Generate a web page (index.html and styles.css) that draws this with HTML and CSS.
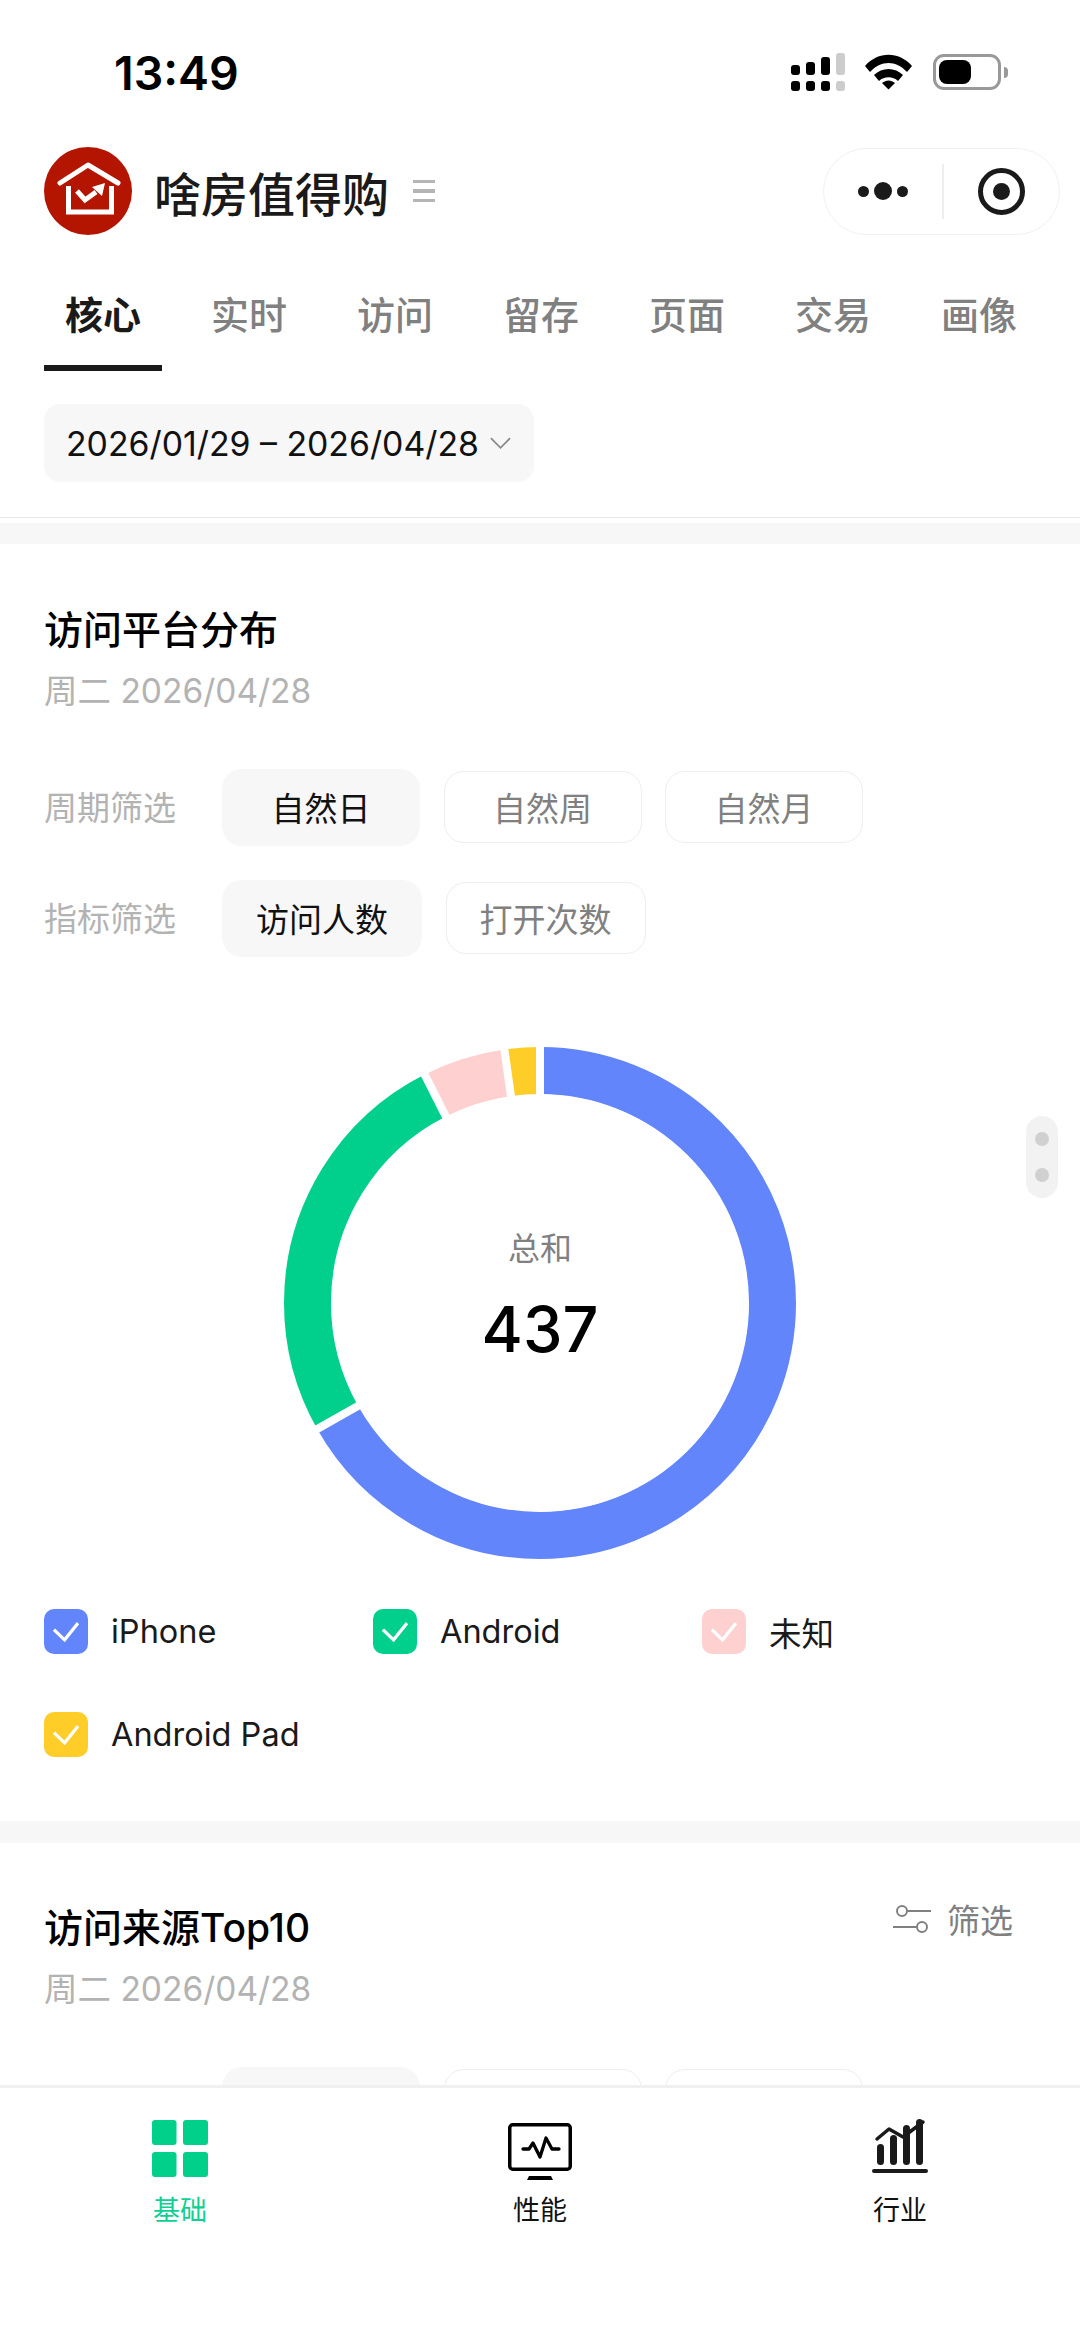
FILE: index.html
```html
<!DOCTYPE html>
<html lang="zh">
<head>
<meta charset="utf-8">
<title>访问分析</title>
<link rel="stylesheet" href="styles.css">
</head>
<body>
<div class="app">
  <header class="status">
    <span class="time">13:49</span>
    <div class="status-icons">
      <svg class="signal" width="54" height="38" viewBox="0 0 54 38">
        <g fill="#000">
          <rect x="0" y="12" width="9" height="10" rx="3"/><rect x="15" y="9" width="9" height="13" rx="3"/><rect x="30" y="4" width="9" height="18" rx="3"/>
          <rect x="0" y="28" width="9" height="10" rx="3"/><rect x="15" y="28" width="9" height="10" rx="3"/><rect x="30" y="28" width="9" height="10" rx="3"/>
        </g>
        <g fill="#ccc"><rect x="45" y="0" width="9" height="22" rx="3"/><rect x="45" y="28" width="9" height="10" rx="3"/></g>
      </svg>
      <svg class="wifi" width="47" height="36" viewBox="0 0 47 36">
        <path d="M0 12C13-3 34-3 47 12l-5 6C31 6 16 6 5 18z" fill="#000"/>
        <path d="M9 21c8-8 21-8 29 0l-5 6c-5-5-14-5-19 0z" fill="#000"/>
        <path d="M17 29c4-3.500 9-3.500 13 0l-6.500 6.500z" fill="#000"/>
      </svg>
      <div class="battery"><span class="battery-level"></span></div>
      <span class="battery-cap"></span>
    </div>
  </header>

  <nav class="navbar">
    <svg class="logo" width="88" height="88" viewBox="0 0 88 88">
      <circle cx="44" cy="44" r="44" fill="#b41500"/>
      <path d="M16 36L44 18L74 36" fill="none" stroke="#fff" stroke-width="5" stroke-linecap="round" stroke-linejoin="round"/>
      <path d="M24.500 39V65H67.500V39" fill="none" stroke="#fff" stroke-width="5"/>
      <path d="M33 44L41 53L52 45" fill="none" stroke="#fff" stroke-width="5"/>
      <path d="M48 40L61 36L58 49z" fill="#fff"/>
    </svg>
    <h1 class="app-name">啥房值得购</h1>
    <span class="menu-lines"><i></i><i></i><i></i></span>
    <div class="capsule">
      <div class="capsule-more"><i class="dot"></i><i class="dot big"></i><i class="dot"></i></div>
      <span class="capsule-div"></span>
      <div class="capsule-target"><span></span></div>
    </div>
  </nav>

  <div class="tabs">
    <div class="tab active">核心</div>
    <div class="tab">实时</div>
    <div class="tab">访问</div>
    <div class="tab">留存</div>
    <div class="tab">页面</div>
    <div class="tab">交易</div>
    <div class="tab">画像</div>
  </div>

  <main class="scroll">
    <section class="date-bar">
      <div class="date-pill">
        <span>2026/01/29 – 2026/04/28</span>
        <svg width="21" height="12" viewBox="0 0 22 12"><path d="M1 1L11 11L21 1" fill="none" stroke="#888" stroke-width="1.800"/></svg>
      </div>
    </section>

    <section class="card first">
      <h2 class="card-title">访问平台分布</h2>
      <p class="card-date">周二 2026/04/28</p>
      <div class="filter-row row-period">
        <span class="filter-label">周期筛选</span>
        <div class="chips">
          <span class="chip on">自然日</span>
          <span class="chip">自然周</span>
          <span class="chip">自然月</span>
        </div>
      </div>
      <div class="filter-row row-metric">
        <span class="filter-label">指标筛选</span>
        <div class="chips">
          <span class="chip on wide">访问人数</span>
          <span class="chip wide">打开次数</span>
        </div>
      </div>
      <div class="donut">
        <svg width="512" height="512" viewBox="0 0 512 512">
          <g fill="none" stroke-width="47" transform="rotate(-90 256 256)">
            <circle class="seg" cx="256" cy="256" r="232.500" pathLength="360" stroke="#6285fb" stroke-dasharray="240.500 119.500"/>
            <circle class="seg" cx="256" cy="256" r="232.500" pathLength="360" stroke="#01d08c" stroke-dasharray="92.700 267.300" stroke-dashoffset="-240.500"/>
            <circle class="seg" cx="256" cy="256" r="232.500" pathLength="360" stroke="#fed0cf" stroke-dasharray="18.800 341.200" stroke-dashoffset="-333.200"/>
            <circle class="seg" cx="256" cy="256" r="232.500" pathLength="360" stroke="#fecd27" stroke-dasharray="8 352" stroke-dashoffset="-352"/>
          </g>
          <g stroke="#fff" stroke-width="8">
            <line x1="256" y1="256" x2="256" y2="-4"/>
            <line x1="256" y1="256" x2="256" y2="-4" transform="rotate(240.500 256 256)"/>
            <line x1="256" y1="256" x2="256" y2="-4" transform="rotate(333.200 256 256)"/>
            <line x1="256" y1="256" x2="256" y2="-4" transform="rotate(352 256 256)"/>
          </g>
          <circle cx="256" cy="256" r="208.500" fill="#fff"/>
        </svg>
        <div class="donut-center">
          <span class="donut-label">总和</span>
          <span class="donut-value">437</span>
        </div>
      </div>
      <ul class="legend">
        <li><span class="check blue"><svg width="26" height="21" viewBox="0 0 28 22"><path d="M1 9L12.500 20L27 2" fill="none" stroke="#fff" stroke-width="3.500"/></svg></span>iPhone</li>
        <li><span class="check green"><svg width="26" height="21" viewBox="0 0 28 22"><path d="M1 9L12.500 20L27 2" fill="none" stroke="#fff" stroke-width="3.500"/></svg></span>Android</li>
        <li><span class="check pink"><svg width="26" height="21" viewBox="0 0 28 22"><path d="M1 9L12.500 20L27 2" fill="none" stroke="#fff" stroke-width="3.500"/></svg></span>未知</li>
        <li><span class="check yellow"><svg width="26" height="21" viewBox="0 0 28 22"><path d="M1 9L12.500 20L27 2" fill="none" stroke="#fff" stroke-width="3.500"/></svg></span>Android Pad</li>
      </ul>
    </section>

    <section class="card second">
      <div class="card-head">
        <div>
          <h2 class="card-title">访问来源Top10</h2>
          <p class="card-date">周二 2026/04/28</p>
        </div>
        <div class="filter-btn">
          <svg width="38" height="32" viewBox="0 0 38 32" fill="none" stroke="#808080" stroke-width="2">
            <circle cx="9" cy="8" r="5"/><path d="M14 8H38"/>
            <circle cx="29" cy="24" r="5"/><path d="M0 24H24"/>
          </svg>
          <span>筛选</span>
        </div>
      </div>
      <div class="filter-row row-cut">
        <span class="filter-label"></span>
        <div class="chips">
          <span class="chip on"></span>
          <span class="chip"></span>
          <span class="chip"></span>
        </div>
      </div>
    </section>

    <div class="float-handle"><i></i><i></i></div>
  </main>

  <footer class="tabbar">
    <div class="bar-item active">
      <svg width="58" height="62" viewBox="0 0 58 62" fill="#00d08a">
        <rect x="1" y="1" width="24.500" height="25" rx="3"/><rect x="32" y="1" width="25" height="25" rx="3"/>
        <rect x="1" y="33" width="24.500" height="25" rx="3"/><rect x="32" y="33" width="25" height="25" rx="3"/>
      </svg>
      <span>基础</span>
    </div>
    <div class="bar-item">
      <svg width="66" height="62" viewBox="0 0 66 62">
        <rect x="2.750" y="5.750" width="60.500" height="44.500" rx="3" fill="none" stroke="#000" stroke-width="3.500"/>
        <path d="M16 30H22L26 24L33 38L39 19L45 30H52" fill="none" stroke="#000" stroke-width="3.300" stroke-linecap="round" stroke-linejoin="round"/>
        <path d="M20 61L22 57H44L46 61z"/>
      </svg>
      <span>性能</span>
    </div>
    <div class="bar-item">
      <svg width="58" height="62" viewBox="0 0 58 62">
        <path d="M6 20L18 10L32 18L52 3" fill="none" stroke="#1a1a1a" stroke-width="3.500" stroke-linecap="round" stroke-linejoin="round"/>
        <g fill="#1a1a1a">
          <rect x="6" y="25" width="7" height="21" rx="3.500"/><rect x="19" y="16" width="7" height="30" rx="3.500"/>
          <rect x="32" y="6" width="7" height="40" rx="3.500"/><rect x="45" y="0" width="7" height="46" rx="3.500"/>
          <rect x="1" y="50" width="56" height="4" rx="2"/>
        </g>
      </svg>
      <span>行业</span>
    </div>
  </footer>
</div>
</body>
</html>
```
FILE: styles.css
```css
* { box-sizing: border-box; margin: 0; padding: 0; }
html, body { width: 1080px; height: 2337px; overflow: hidden; background: #fff; }
body { font-family: "Inter", "Noto Sans CJK SC", sans-serif; color: #1a1a1a; }
i { display: block; font-style: normal; }
ul { list-style: none; }

.app { display: flex; flex-direction: column; width: 1080px; height: 2337px; }

.status { flex: none; height: 147px; display: flex; align-items: flex-start; justify-content: space-between; padding: 53px 72px 0 114px; }
.time { margin-top: 1px; font: 600 46.500px/38px "Inter", sans-serif; color: #000; }
.status-icons { display: flex; align-items: center; height: 38px; }
.wifi { margin-left: 20px; }
.battery { margin-left: 21px; width: 68px; height: 36px; border: 3px solid #999; border-radius: 11px; padding: 3px; }
.battery-level { display: block; width: 32px; height: 24px; background: #000; border-radius: 8px; }
.battery-cap { width: 4px; height: 11px; margin-left: 3px; background: #999; border-radius: 0 4px 4px 0; }

.navbar { flex: none; height: 88px; display: flex; align-items: center; padding-left: 44px; padding-right: 20px; }
.logo { flex: none; }
.app-name { margin: 2px 0 0 22px; font: 500 47px/62px "Noto Sans CJK SC", sans-serif; color: #1a1a1a; }
.menu-lines { margin-left: 24px; display: flex; flex-direction: column; gap: 6px; width: 22px; }
.menu-lines i { height: 3.500px; background: #b5b5b5; }
.capsule { margin-left: auto; width: 237px; height: 87px; border: 1.500px solid #f1f1f1; border-radius: 44px; display: flex; align-items: center; background: #fff; }
.capsule-more { width: 118px; display: flex; align-items: center; justify-content: flex-end; gap: 5px; padding-right: 34px; }
.dot { width: 11px; height: 11px; border-radius: 50%; background: #1a1a1a; }
.dot.big { width: 18px; height: 18px; }
.capsule-div { width: 1.500px; height: 55px; background: #eee; }
.capsule-target { width: 47px; height: 47px; margin-left: 34px; border: 5px solid #1a1a1a; border-radius: 50%; display: flex; align-items: center; justify-content: center; }
.capsule-target span { width: 17px; height: 17px; background: #1a1a1a; border-radius: 50%; }

.tabs { flex: none; height: 136px; display: flex; gap: 28px; padding: 0 0 0 44px; overflow: hidden; }
.tab { width: 118px; height: 136px; padding-top: 50px; text-align: center; font: 500 38px/56px "Noto Sans CJK SC", sans-serif; color: #808080; }
.tab.active { color: #1a1a1a; font-weight: 700; border-bottom: 6px solid #1a1a1a; }

.scroll { position: relative; flex: 1; min-height: 0; overflow: hidden; }

.date-bar { height: 147px; padding: 33px 0 0 44px; border-bottom: 1.500px solid #e8e8e8; }
.date-pill { width: 490px; height: 78px; background: #f7f7f7; border-radius: 16px; display: flex; align-items: center; justify-content: space-between; padding: 0 23px 0 22px; font-size: 33.800px; color: #111; }

.card { background: #fff; padding: 0 44px; }
.card.first { margin-top: 5px; border-top: 21px solid #f7f7f7; height: 1320px; padding-top: 62px; border-bottom: 22px solid #f7f7f7; }
.card.second { padding-top: 61px; position: relative; }
.card-title { font: 500 39px/48px "Inter", "Noto Sans CJK SC", sans-serif; color: #000; }
.card-date { margin-top: 13.500px; font: 400 33.500px/46px "Inter", "Noto Sans CJK SC", sans-serif; color: #b3b3b3; }

.filter-row { display: flex; align-items: flex-start; }
.row-period { margin-top: 55px; }
.row-metric { margin-top: 34px; }
.row-cut { margin-top: 55px; }
.filter-label { width: 178px; flex: none; font: 400 33px/74px "Noto Sans CJK SC", sans-serif; color: #b3b3b3; }
.chips { display: flex; gap: 23.500px; align-items: center; }
.chip { width: 198px; height: 72px; border: 1.500px solid #eee; border-radius: 20px; display: flex; align-items: center; justify-content: center; font: 400 33px/1 "Noto Sans CJK SC", sans-serif; color: #808080; background: #fff; }
.chip.on { height: 77px; border: 0; background: #f7f7f7; color: #111; }
.chip.wide { width: 200px; }

.donut { position: relative; width: 512px; height: 512px; margin: 90.500px 0 0 240px; }
.donut svg { display: block; }
.donut-center { position: absolute; inset: 0; display: flex; flex-direction: column; align-items: center; }
.donut-label { margin-top: 176px; font: 400 32px/46px "Noto Sans CJK SC", sans-serif; color: #808080; }
.donut-value { margin-top: 21px; font: 500 63px/78px "Inter", sans-serif; color: #000; }

.legend { display: flex; flex-wrap: wrap; row-gap: 58px; margin-top: 50px; }
.legend li { width: 329px; height: 45px; display: flex; align-items: center; font-size: 32.500px; color: #1a1a1a; }
.legend li:nth-child(3n) { width: 300px; }
.check { flex: none; width: 44px; height: 45px; margin-right: 23px; border-radius: 10px; display: flex; align-items: center; justify-content: center; }
.check.blue { background: #6285fb; }
.check.green { background: #01d08c; }
.check.pink { background: #fed0cf; }
.check.yellow { background: #fecd27; }

.card-head { display: flex; justify-content: space-between; }
.filter-btn { display: flex; align-items: center; gap: 16px; height: 40px; margin-top: -5px; padding-right: 23px; font: 400 33px/40px "Noto Sans CJK SC", sans-serif; color: #808080; }

.float-handle { position: absolute; right: 22px; top: 745px; width: 32px; height: 82px; border-radius: 16px; background: #f2f2f2; display: flex; flex-direction: column; align-items: center; gap: 22px; padding-top: 16px; }
.float-handle i { width: 14px; height: 14px; border-radius: 50%; background: #d0d0d0; }

.tabbar { flex: none; height: 252px; background: #fff; border-top: 3px solid #f0f0f0; display: flex; position: relative; }
.bar-item { width: 360px; display: flex; flex-direction: column; align-items: center; padding-top: 31px; font: 400 27px/36px "Noto Sans CJK SC", sans-serif; color: #111; }
.bar-item span { margin-top: 10px; }
.bar-item svg { display: block; }
.bar-item.active { color: #0fd092; }
```
